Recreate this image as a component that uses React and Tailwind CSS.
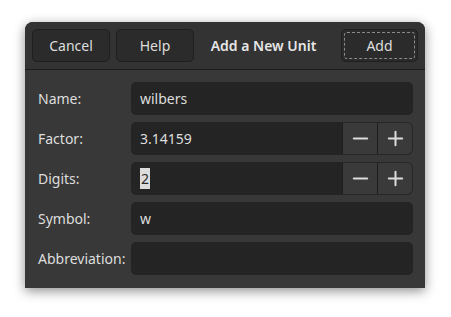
import { Minus, Plus } from 'lucide-react'

function Field({ label, children }) {
  return (
    <div className="flex h-[33px] items-center">
      <div className="w-[106px] pl-[13px] text-[14px] text-[#dedede]">{label}</div>
      <div className="flex h-full flex-1">{children}</div>
    </div>
  )
}

function Entry({ value, rounded = 'rounded-[5px]' }) {
  return (
    <div className={`flex h-full flex-1 items-center bg-[#242424] pl-[9px] text-[14px] text-[#dedede] ${rounded}`}>
      {value}
    </div>
  )
}

function SpinEntry({ value, selected }) {
  return (
    <div className="flex h-full flex-1">
      <div className="flex h-full flex-1 items-center rounded-l-[5px] bg-[#242424] pl-[9px] text-[14px] text-[#dedede]">
        {selected ? (
          <span className="bg-[#dcdcdc] px-px text-[#2a2a2a]">{value}</span>
        ) : (
          value
        )}
      </div>
      <div className="flex h-full overflow-hidden rounded-r-[6px] border border-l-0 border-[#262626] bg-[#3a3a3a]">
        <div className="flex w-[35px] items-center justify-center border-l border-[#1e1e1e]">
          <Minus size={23} strokeWidth={2.1} className="text-[#dcdcdc]" />
        </div>
        <div className="flex w-[35px] items-center justify-center border-l border-[#1e1e1e]">
          <Plus size={23} strokeWidth={2.1} className="text-[#dcdcdc]" />
        </div>
      </div>
    </div>
  )
}

export default function App() {
  return (
    <div
      className="h-[317px] w-[451px] bg-white pl-[25px] pt-[22px]"
      style={{ fontFamily: '"Noto Sans", "Open Sans", sans-serif' }}
    >
      <div className="w-[400px] overflow-hidden rounded-t-[8px] bg-[#383838] shadow-[0_3px_12px_rgba(0,0,0,0.45)]">
        <div className="flex h-[48px] items-center border-b border-[#1c1c1c] bg-[#333333] px-[7px]">
          <button className="h-[33px] w-[78px] rounded-[5px] border border-[#1f1f1f] bg-[#2b2b2b] text-[14px] text-[#dedede]">
            Cancel
          </button>
          <button className="ml-[6px] h-[33px] w-[78px] rounded-[5px] border border-[#1f1f1f] bg-[#2b2b2b] text-[14px] text-[#dedede]">
            Help
          </button>
          <div className="flex-1 pr-[8px] text-center text-[14px] font-semibold text-[#e6e6e6]">Add a New Unit</div>
          <button className="flex h-[33px] w-[77px] items-center justify-center rounded-[5px] border border-[#1f1f1f] bg-[#2b2b2b] p-[2px]">
            <span className="flex h-full w-full items-center justify-center rounded-[3px] border border-dashed border-[#8a8a8a] text-[14px] text-[#dedede]">
              Add
            </span>
          </button>
        </div>
        <div className="flex flex-col gap-[7px] pb-[13px] pr-[12px] pt-[12px]">
          <Field label="Name:">
            <Entry value="wilbers" />
          </Field>
          <Field label="Factor:">
            <SpinEntry value="3.14159" />
          </Field>
          <Field label="Digits:">
            <SpinEntry value="2" selected />
          </Field>
          <Field label="Symbol:">
            <Entry value="w" />
          </Field>
          <Field label="Abbreviation:">
            <Entry value="" />
          </Field>
        </div>
      </div>
    </div>
  )
}
